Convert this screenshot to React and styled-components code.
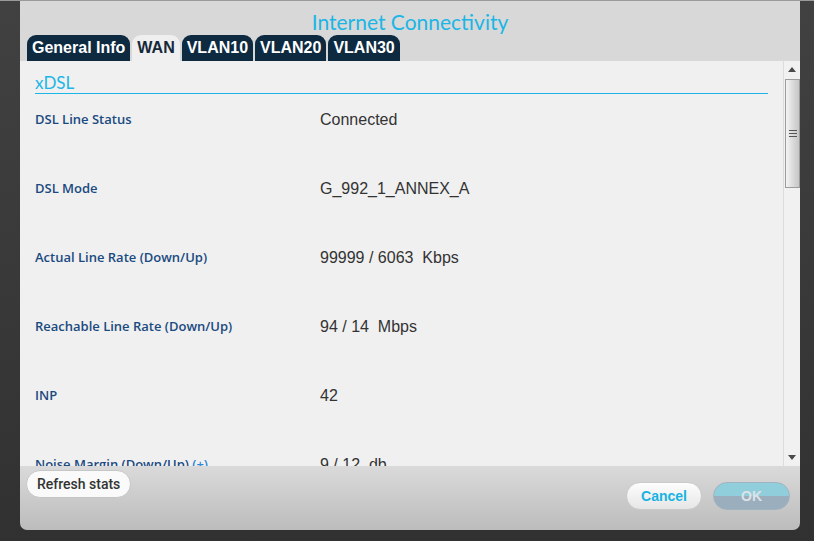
import React from 'react';
import styled, { createGlobalStyle } from 'styled-components';

const GlobalStyle = createGlobalStyle`
  html, body {
    margin: 0;
    padding: 0;
  }
  body {
    background: linear-gradient(#414141, #313131);
    font-family: "Liberation Sans", Arial, sans-serif;
    overflow: hidden;
  }
`;

const Page = styled.div`
  height: 541px;
  border-top: 1px solid #9a9a9a;
  box-sizing: border-box;
`;

const Dialog = styled.div`
  width: 780px;
  height: 529px;
  margin-left: 20px;
  display: flex;
  flex-direction: column;
  border-radius: 0 0 7px 7px;
  overflow: hidden;
`;

const Header = styled.div`
  height: 60px;
  background: #d8d8d8;
  display: flex;
  flex-direction: column;
  justify-content: space-between;
`;

const Title = styled.h1`
  margin: 9px 0 0;
  text-align: center;
  font-family: Lato, "Open Sans", sans-serif;
  font-weight: 400;
  font-size: 21px;
  line-height: 24px;
  color: #1bb6e5;
`;

const Tabs = styled.ul`
  display: flex;
  gap: 2px;
  margin: 0;
  padding: 0 0 0 7px;
  list-style: none;
`;

const Tab = styled.li`
  height: 26px;
  padding: 0 5px;
  display: flex;
  align-items: center;
  border-radius: 9px 9px 0 0;
  font-weight: 700;
  font-size: 16px;
  background: ${p => (p.$active ? '#efefef' : '#0e2a41')};
  color: ${p => (p.$active ? '#14283a' : '#ffffff')};
`;

const Body = styled.div`
  height: 405px;
  display: flex;
  background: #f0f0f0;
`;

const Content = styled.div`
  flex: 1;
  overflow: hidden;
  padding: 0 15px;
`;

const Section = styled.h2`
  margin: 12px 0 15px;
  font-family: Lato, "Open Sans", sans-serif;
  font-weight: 400;
  font-size: 17px;
  line-height: 20px;
  color: #1bb6e5;
  border-bottom: 1px solid #1bb6e5;
`;

const Row = styled.div`
  height: 69px;
  display: flex;
`;

const Label = styled.div`
  width: 285px;
  font-family: "Open Sans", Lato, sans-serif;
  font-weight: 600;
  font-size: 13px;
  line-height: 20px;
  color: #1a4a80;

  span {
    color: #2f86d6;
  }
`;

const Value = styled.div`
  padding-top: 1px;
  font-size: 16px;
  line-height: 20px;
  color: #333;
  white-space: pre;
`;

const Scrollbar = styled.div`
  width: 16px;
  border-left: 1px solid #dcdcdc;
  display: flex;
  flex-direction: column;
  align-items: center;
  background: #f1f1f1;
`;

const Arrow = styled.div`
  height: 17px;
  display: flex;
  align-items: center;
  justify-content: center;
`;

const Track = styled.div`
  flex: 1;
  width: 100%;
`;

const Thumb = styled.div`
  margin: 1px 0 0 1px;
  width: 13px;
  height: 107px;
  border: 1px solid #9c9c9c;
  background: linear-gradient(90deg, #f4f4f4, #dcdcdc 50%, #c6c6c6);
  display: flex;
  align-items: center;
  justify-content: center;
`;

const Footer = styled.div`
  flex: 1;
  display: flex;
  align-items: flex-start;
  background: linear-gradient(#dadada, #bcbcbc);
`;

const RefreshButton = styled.button`
  margin: 4px 0 0 6px;
  height: 28px;
  padding: 0 10px;
  border: 1px solid #c6c6c6;
  border-radius: 14px;
  background: #fafafa;
  font-family: Roboto, sans-serif;
  font-weight: 500;
  font-size: 14px;
  color: #333;
`;

const Actions = styled.div`
  margin: 16px 10px 0 auto;
  display: flex;
  gap: 11px;
`;

const PillButton = styled.button`
  width: ${p => p.$width}px;
  height: 28px;
  border-radius: 14px;
  font-family: "Liberation Sans", Arial, sans-serif;
  font-weight: 700;
  font-size: 14px;
`;

const CancelButton = styled(PillButton)`
  border: 1px solid #cacaca;
  background: linear-gradient(#fdfdfd, #e6e6e6);
  color: #18b3e2;
`;

const OkButton = styled(PillButton)`
  border: 1px solid #9fb3c0;
  background: linear-gradient(#90cedb 50%, #9baebd 50%);
  color: #dde3e8;
`;

const rows = [
  ['DSL Line Status', 'Connected'],
  ['DSL Mode', 'G_992_1_ANNEX_A'],
  ['Actual Line Rate (Down/Up)', '99999 / 6063  Kbps'],
  ['Reachable Line Rate (Down/Up)', '94 / 14  Mbps'],
  ['INP', '42'],
  ['Noise Margin (Down/Up)', '9 / 12  db', true],
];

const tabs = ['General Info', 'WAN', 'VLAN10', 'VLAN20', 'VLAN30'];

export default function App() {
  return (
    <>
      <GlobalStyle />
      <Page>
        <Dialog>
          <Header>
            <Title>Internet Connectivity</Title>
            <Tabs>
              {tabs.map(t => (
                <Tab key={t} $active={t === 'WAN'}>{t}</Tab>
              ))}
            </Tabs>
          </Header>
          <Body>
            <Content>
              <Section>xDSL</Section>
              {rows.map(([label, value, more]) => (
                <Row key={label}>
                  <Label>
                    {label}
                    {more && <span> (+)</span>}
                  </Label>
                  <Value>{value}</Value>
                </Row>
              ))}
            </Content>
            <Scrollbar>
              <Arrow>
                <svg width="8" height="5" viewBox="0 0 8 5">
                  <path d="M0 5 L4 0 L8 5 Z" fill="#4a4a4a" />
                </svg>
              </Arrow>
              <Track>
                <Thumb>
                  <svg width="8" height="7" viewBox="0 0 8 7">
                    <path d="M0 0.5 H8 M0 3.5 H8 M0 6.5 H8" stroke="#555" strokeWidth="1" />
                  </svg>
                </Thumb>
              </Track>
              <Arrow>
                <svg width="8" height="5" viewBox="0 0 8 5">
                  <path d="M0 0 L8 0 L4 5 Z" fill="#4a4a4a" />
                </svg>
              </Arrow>
            </Scrollbar>
          </Body>
          <Footer>
            <RefreshButton type="button">Refresh stats</RefreshButton>
            <Actions>
              <CancelButton type="button" $width={76}>Cancel</CancelButton>
              <OkButton type="button" $width={77}>OK</OkButton>
            </Actions>
          </Footer>
        </Dialog>
      </Page>
    </>
  );
}
